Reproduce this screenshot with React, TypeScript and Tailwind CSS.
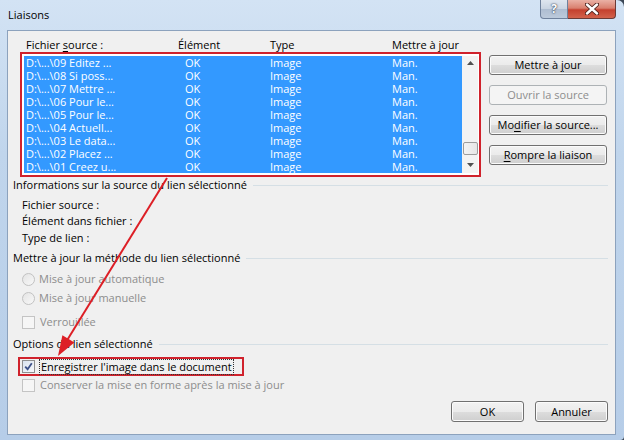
import clsx from "clsx";

const rows = [
    "D:\\...\\09 Editez ...",
    "D:\\...\\08 Si poss...",
    "D:\\...\\07 Mettre ...",
    "D:\\...\\06 Pour le...",
    "D:\\...\\05 Pour le...",
    "D:\\...\\04 Actuell...",
    "D:\\...\\03 Le data...",
    "D:\\...\\02 Placez ...",
    "D:\\...\\01 Creez u...",
];

function Btn({ children, disabled, className }: { children: React.ReactNode; disabled?: boolean; className?: string }) {
    return (
        <div
            className={clsx(
                "flex h-[20px] items-center justify-center rounded-[3px] border text-[11px]",
                disabled
                    ? "border-[#adb2b5] bg-[#f4f4f4] text-[#8d8d8d]"
                    : "border-[#707070] bg-[linear-gradient(#f2f2f2_0%,#ebebeb_50%,#dddddd_51%,#cfcfcf_100%)] text-black shadow-[inset_0_0_0_1px_#fbfbfb]",
                className
            )}
        >
            <span>{children}</span>
        </div>
    );
}

function GroupTitle({ children, className }: { children: React.ReactNode; className?: string }) {
    return (
        <div className={clsx("flex h-[16px] items-center pl-[5px] pr-[7px]", className)}>
            <span>{children}</span>
            <div className="ml-[6px] h-px flex-1 bg-[#d5dfe5]" />
        </div>
    );
}

function Radio({ label }: { label: string }) {
    return (
        <div className="flex h-[16px] items-center pl-[14px] text-[#8d8d8d]">
            <div className="h-[13px] w-[13px] rounded-full border border-[#c2c2c2] bg-[linear-gradient(135deg,#e4e4e4,#f8f8f8)]" />
            <span className="ml-[4px]">{label}</span>
        </div>
    );
}

function EmptyBox() {
    return <div className="h-[13px] w-[13px] border border-[#c4c4c4] bg-[#f6f6f6]" />;
}

export default function App() {
    return (
        <div className="h-[440px] w-[624px] overflow-hidden bg-[#3b4756] font-['Open_Sans',sans-serif] text-[11px] text-black">
            <div className="relative flex h-[440px] w-[624px] flex-col rounded-tr-[7px] rounded-br-[4px] bg-[linear-gradient(180deg,#d3e3f4_0%,#c0d5ec_35%,#b6cde8_100%)] pb-[5px] pl-[7px] pr-[8px]">
                {/* title bar */}
                <div className="flex h-[30px] items-start justify-between">
                    <span className="mt-[7px] pl-[1px] text-[11px] leading-[16px]">Liaisons</span>
                    <div className="flex h-[19px]">
                        <div className="flex w-[28px] items-center justify-center rounded-bl-[4px] border border-t-0 border-[#6f819c] bg-[linear-gradient(#dfe6ef_0%,#c9d4e2_50%,#aebdd1_51%,#bccadb_100%)] text-[12px] font-bold text-white [text-shadow:0_0_2px_#2f3d52,0_0_1px_#2f3d52]">
                            ?
                        </div>
                        <div className="flex w-[48px] items-center justify-center rounded-br-[4px] border border-l-0 border-t-0 border-[#6b3a36] bg-[linear-gradient(#eab1a5_0%,#d9806f_45%,#c4402e_55%,#d2624c_100%)]">
                            <svg width="14" height="12" viewBox="0 0 14 12">
                                <path d="M2 1.5 L12 10.5 M12 1.5 L2 10.5" stroke="#4a1f1a" strokeWidth="4.2" strokeLinecap="round" />
                                <path d="M2 1.5 L12 10.5 M12 1.5 L2 10.5" stroke="#ffffff" strokeWidth="2.4" strokeLinecap="round" />
                            </svg>
                        </div>
                    </div>
                </div>

                {/* client area */}
                <div className="flex flex-1 flex-col border border-[#8ca2bd] bg-[#f0f0f0] leading-[16px]">
                    <div className="flex pt-[6px]">
                        <div className="ml-[12px] w-[461px]">
                            <div className="grid h-[15px] grid-cols-[152px_92px_122px_1fr] items-center pl-[6px]">
                                <span>
                                    Fichier <span className="underline underline-offset-2">s</span>ource :
                                </span>
                                <span>Élément</span>
                                <span>Type</span>
                                <span>Mettre à jour</span>
                            </div>
                            <div className="h-[125px] border-2 border-[#d0222c]">
                                <div className="flex h-full bg-white pb-[2px] pl-[2px] pr-[1px] pt-[2px]">
                                    <div className="flex-1 bg-[#3399ff] text-white">
                                        {rows.map((r) => (
                                            <div key={r} className="grid h-[13px] grid-cols-[159px_85px_122px_1fr] items-center pl-[2px] leading-[13px]">
                                                <span>{r}</span>
                                                <span>OK</span>
                                                <span>Image</span>
                                                <span>Man.</span>
                                            </div>
                                        ))}
                                    </div>
                                    <div className="flex w-[16px] flex-col items-center bg-[#f3f3f3]">
                                        <svg width="7" height="4" viewBox="0 0 7 4" className="mt-[5px]">
                                            <path d="M0 4 L3.5 0 L7 4 Z" fill="#505050" />
                                        </svg>
                                        <div className="mt-[77px] h-[13px] w-[15px] rounded-[2px] border border-[#9c9c9c] bg-[linear-gradient(90deg,#f4f4f4,#e6e6e6)]" />
                                        <svg width="7" height="4" viewBox="0 0 7 4" className="mt-[8px]">
                                            <path d="M0 0 L7 0 L3.5 4 Z" fill="#505050" />
                                        </svg>
                                    </div>
                                </div>
                            </div>
                        </div>
                        <div className="ml-[8px] mt-[18px] flex w-[118px] flex-col gap-[10px]">
                            <Btn>
                                Mettre à <span className="underline underline-offset-2">j</span>our
                            </Btn>
                            <Btn disabled>Ouvrir la source</Btn>
                            <Btn>
                                Mo<span className="underline underline-offset-2">d</span>ifier la source...
                            </Btn>
                            <Btn>
                                <span className="underline underline-offset-2">R</span>ompre la liaison
                            </Btn>
                        </div>
                    </div>

                    <GroupTitle>Informations sur la source du lien sélectionné</GroupTitle>
                    <div className="mt-[4px] flex flex-col pl-[14px]">
                        <div className="h-[16px]">Fichier source :</div>
                        <div className="h-[16px]">Élément dans fichier :</div>
                        <div className="mt-[1px] h-[16px]">Type de lien :</div>
                    </div>

                    <GroupTitle className="mt-[4px]">Mettre à jour la méthode du lien sélectionné</GroupTitle>
                    <div className="mt-[5px]">
                        <Radio label="Mise à jour automatique" />
                    </div>
                    <div className="mt-[3px]">
                        <Radio label="Mise à jour manuelle" />
                    </div>
                    <div className="mt-[8px] flex h-[16px] items-center pl-[14px] text-[#8d8d8d]">
                        <EmptyBox />
                        <span className="ml-[5px]">Verrouillée</span>
                    </div>

                    <GroupTitle className="mt-[6px]">Options du lien sélectionné</GroupTitle>
                    <div className="ml-[10px] mt-[5px] flex h-[19px] w-[226px] items-center border-2 border-[#d0222c] pl-[2px]">
                        <div className="flex h-[13px] w-[13px] items-center justify-center border border-[#8e8f8f] bg-[linear-gradient(135deg,#d9e3ef,#f6f8fb)]">
                            <svg width="9" height="9" viewBox="0 0 9 9">
                                <path d="M1.2 4.6 L3.6 7.2 L7.8 1.2" fill="none" stroke="#3d5289" strokeWidth="1.8" />
                            </svg>
                        </div>
                        <span className="ml-[4px] border border-dotted border-[#333] px-px leading-[14px]">
                            Enre<span className="underline underline-offset-2">g</span>istrer l'image dans le document
                        </span>
                    </div>
                    <div className="mt-[1px] flex h-[16px] items-center pl-[14px] text-[#8d8d8d]">
                        <EmptyBox />
                        <span className="ml-[5px]">Conserver la mise en forme après la mise à jour</span>
                    </div>

                    <div className="mt-[8px] flex justify-end gap-[11px] pr-[7px]">
                        <Btn className="h-[21px] w-[73px] border-[#3c7fb1] shadow-[inset_0_0_0_1px_#bfe6f8]">OK</Btn>
                        <Btn className="h-[21px] w-[73px]">Annuler</Btn>
                    </div>
                </div>

                {/* red arrow annotation */}
                <svg className="pointer-events-none absolute left-0 top-0" width="624" height="440" viewBox="0 0 624 440">
                    <line x1="167" y1="178" x2="66" y2="342" stroke="#dd1f26" strokeWidth="2" />
                    <path d="M58 356 L74.4 342.5 L62.4 335.2 Z" fill="#dd1f26" />
                </svg>
            </div>
        </div>
    );
}
